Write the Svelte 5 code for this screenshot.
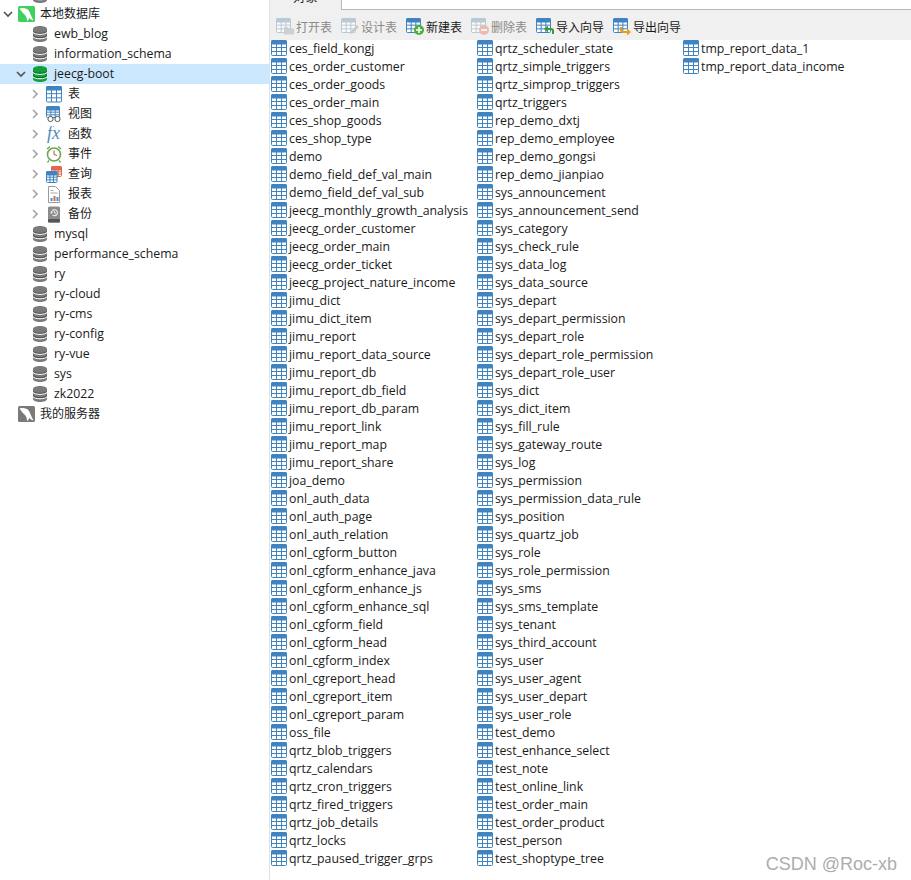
<script>
  const dbsTop = ["ewb_blog", "information_schema"];
  const dbsBottom = ["mysql", "performance_schema", "ry", "ry-cloud", "ry-cms", "ry-config", "ry-vue", "sys", "zk2022"];
  const objects = [
    ["表", "table"], ["视图", "view"], ["函数", "fx"], ["事件", "clock"],
    ["查询", "query"], ["报表", "report"], ["备份", "backup"],
  ];
  const tools = [
    ["打开表", "open", true], ["设计表", "design", true], ["新建表", "add", false],
    ["删除表", "del", true], ["导入向导", "import", false], ["导出向导", "export", false],
  ];
  const tables = `ces_field_kongj ces_order_customer ces_order_goods ces_order_main ces_shop_goods ces_shop_type demo demo_field_def_val_main demo_field_def_val_sub jeecg_monthly_growth_analysis jeecg_order_customer jeecg_order_main jeecg_order_ticket jeecg_project_nature_income jimu_dict jimu_dict_item jimu_report jimu_report_data_source jimu_report_db jimu_report_db_field jimu_report_db_param jimu_report_link jimu_report_map jimu_report_share joa_demo onl_auth_data onl_auth_page onl_auth_relation onl_cgform_button onl_cgform_enhance_java onl_cgform_enhance_js onl_cgform_enhance_sql onl_cgform_field onl_cgform_head onl_cgform_index onl_cgreport_head onl_cgreport_item onl_cgreport_param oss_file qrtz_blob_triggers qrtz_calendars qrtz_cron_triggers qrtz_fired_triggers qrtz_job_details qrtz_locks qrtz_paused_trigger_grps qrtz_scheduler_state qrtz_simple_triggers qrtz_simprop_triggers qrtz_triggers rep_demo_dxtj rep_demo_employee rep_demo_gongsi rep_demo_jianpiao sys_announcement sys_announcement_send sys_category sys_check_rule sys_data_log sys_data_source sys_depart sys_depart_permission sys_depart_role sys_depart_role_permission sys_depart_role_user sys_dict sys_dict_item sys_fill_rule sys_gateway_route sys_log sys_permission sys_permission_data_rule sys_position sys_quartz_job sys_role sys_role_permission sys_sms sys_sms_template sys_tenant sys_third_account sys_user sys_user_agent sys_user_depart sys_user_role test_demo test_enhance_select test_note test_online_link test_order_main test_order_product test_person test_shoptype_tree tmp_report_data_1 tmp_report_data_income`.split(" ");
</script>

{#snippet grid(color, x = 0.5, y = 0.5, w = 15, h = 15)}
  <rect x={x} y={y} width={w} height={h} rx="1" fill="#fff" stroke={color} />
  <rect x={x} y={y} width={w} height="3.5" rx="1" fill={color} stroke={color} />
  <path d="M{x + w / 3} {y + 3}V{y + h}M{x + (2 * w) / 3} {y + 3}V{y + h}M{x} {y + 3 + (h - 3) / 3}H{x + w}M{x} {y + 3 + (2 * (h - 3)) / 3}H{x + w}" stroke={color} fill="none" />
{/snippet}

{#snippet db(color, dark)}
  <svg class="db" width="14" height="16" viewBox="0 0 14 16">
    <path d="M0 3c0-4 14-4 14 0v10c0 4-14 4-14 0z" fill={color} />
    <path d="M0 5.200c1.500 2.800 12.500 2.800 14 0M0 9.600c1.500 2.800 12.500 2.800 14 0" stroke={dark} stroke-width="1.200" fill="none" />
    <path d="M0 6.300c1.500 2.800 12.500 2.800 14 0M0 10.700c1.500 2.800 12.500 2.800 14 0" stroke="#fff" stroke-width="1" fill="none" />
  </svg>
{/snippet}

{#snippet dolphin(bg)}
  <svg class="fish" width="17" height="16" viewBox="0 0 17 16">
    <rect width="17" height="16" rx="1.500" fill={bg} />
    <path d="M1.500 2.500C5 1.500 9 2 11 5c1.500 2.500 2 5 4.500 9.500-2-.5-3-1.500-4-2.500-.5 1-1.500 2.500-2.500 3 0-2-.5-4-1.500-5.500C6 8 3.500 6 1.500 2.500z" fill="#fff" />
  </svg>
{/snippet}

{#snippet objIcon(kind)}
  <svg width="16" height="17" viewBox="0 0 16 17">
    {#if kind === "table"}
      {@render grid("#3f84c0", 0.5, 0.5, 15, 15.500)}
    {:else if kind === "view"}
      {@render grid("#3f84c0", 0.5, 0.5, 13, 11)}
      <circle cx="4.500" cy="13" r="2.600" fill="#fff" stroke="#555" />
      <circle cx="11.500" cy="13" r="2.600" fill="#fff" stroke="#555" />
    {:else if kind === "fx"}
      <text x="1" y="13" class="fx">fx</text>
    {:else if kind === "clock"}
      <circle cx="8" cy="8.500" r="6.500" fill="#fff" stroke="#6aa84f" stroke-width="1.600" />
      <path d="M8 4.500v4l3 1" stroke="#c0504d" fill="none" />
      <path d="M1 3l3-2.500M15 3l-3-2.500M3 14.500l-1.500 2M13 14.500l1.500 2" stroke="#6aa84f" stroke-width="1.300" />
    {:else if kind === "query"}
      {@render grid("#e0684b", 5.500, 0.500, 10, 10)}
      {@render grid("#3f84c0", 0.500, 5.500, 10.500, 11)}
    {:else if kind === "report"}
      <path d="M2.500.5h7l4 4v12h-11z" fill="#fff" stroke="#9a9a9a" />
      <path d="M4.500 4.500h3M4.500 7h7" stroke="#aaa" />
      <rect x="4.500" y="12" width="2" height="3" fill="#4a90d0" />
      <rect x="7.500" y="10" width="2" height="5" fill="#e8623a" />
      <rect x="10.500" y="11" width="2" height="4" fill="#4a90d0" />
    {:else}
      <rect x="2" y="0.500" width="12" height="16" rx="1.500" fill="#8c8c8c" />
      <rect x="2" y="13" width="12" height="3.500" rx="1" fill="#555" />
      <path d="M5.500 6.500a3 3 0 1 1 1 2.400" stroke="#e6e6e6" stroke-width="1.200" fill="none" />
      <path d="M4 6h3l-1.500 2z" fill="#e6e6e6" />
      <path d="M8.500 5v2h1.500" stroke="#e6e6e6" fill="none" />
    {/if}
  </svg>
{/snippet}

{#snippet toolIcon(kind, off)}
  <svg class:off width="19" height="18" viewBox="0 0 19 18">
    {@render grid(off ? "#a9bccb" : "#3f84c0", 0.500, 0.500, 14, 14)}
    {#if kind === "add"}
      <circle cx="13" cy="12" r="5" fill="#4caf3c" />
      <path d="M10 12h6M13 9v6" stroke="#fff" stroke-width="1.600" />
    {:else if kind === "del"}
      <circle cx="13" cy="12" r="5" fill="#e8a8a0" />
      <path d="M10 12h6" stroke="#fff" stroke-width="1.600" />
    {:else if kind === "open"}
      <path d="M8 9h4l1 1.500h5v6H8z" fill="#c4c4c4" />
    {:else if kind === "design"}
      <path d="M9 16l1-3 6-6 2 2-6 6z" fill="#bdbdbd" />
    {:else if kind === "import"}
      <path d="M17 16v-3a2 2 0 0 0-2-2h-4" stroke="#3c9a3c" stroke-width="2" fill="none" />
      <path d="M8 11l4-3.500v7z" fill="#3c9a3c" />
    {:else}
      <path d="M8 9v3a2 2 0 0 0 2 2h4" stroke="#f09a1a" stroke-width="2" fill="none" />
      <path d="M18 14l-4-3.500v7z" fill="#f09a1a" />
    {/if}
  </svg>
{/snippet}

{#snippet chevron(open, color)}
  {#if open}
    <svg class="chev" width="10" height="10" viewBox="0 0 10 10">
      <path d="M1 3l4 4 4-4" stroke={color} stroke-width="1.700" fill="none" />
    </svg>
  {:else}
    <svg class="chev" width="7" height="10" viewBox="0 0 7 10">
      <path d="M1 1l4 4-4 4" stroke={color} stroke-width="1.700" fill="none" />
    </svg>
  {/if}
{/snippet}

<div class="app">
  <aside class="tree">
    <div class="clipped">{@render db("#7a7a7a", "#555")}</div>
    <div class="row conn">
      {@render chevron(true, "#555")}
      {@render dolphin("#3fd05f")}
      <span class="cjk">本地数据库</span>
    </div>
    {#each dbsTop as name}
      <div class="row dbrow">{@render db("#7a7a7a", "#555")}<span>{name}</span></div>
    {/each}
    <div class="row dbrow open">
      {@render chevron(true, "#555")}
      {@render db("#12a03c", "#0b6a28")}
      <span>jeecg-boot</span>
    </div>
    {#each objects as [label, kind]}
      <div class="row objrow">
        {@render chevron(false, "#a6a6a6")}
        {@render objIcon(kind)}
        <span class="cjk">{label}</span>
      </div>
    {/each}
    {#each dbsBottom as name}
      <div class="row dbrow">{@render db("#7a7a7a", "#555")}<span>{name}</span></div>
    {/each}
    <div class="row conn server">
      {@render dolphin("#7a7a7a")}
      <span class="cjk">我的服务器</span>
    </div>
  </aside>

  <main class="content">
    <div class="tabs">
      <div class="tab"><span>对象</span></div>
      <div class="tabfill"></div>
    </div>
    <div class="toolbar">
      {#each tools as [label, kind, off]}
        <div class="tool" class:disabled={off}>
          {@render toolIcon(kind, off)}
          <span class="cjk">{label}</span>
        </div>
      {/each}
    </div>
    <div class="list">
      {#each tables as t}
        <div class="item">
          <svg width="16" height="16" viewBox="0 0 16 16">{@render grid("#3f84c0")}</svg>
          <span>{t}</span>
        </div>
      {/each}
    </div>
  </main>

  <div class="mark">CSDN @Roc-xb</div>
</div>

<style>
  :global(body) {
    background: #fff;
  }

  .app {
    position: relative;
    display: flex;
    width: 911px;
    height: 880px;
    overflow: hidden;
    font-family: "Open Sans", "Noto Sans CJK SC", sans-serif;
    font-size: 12.3px;
    color: #1a1a1a;
  }

  .cjk {
    font-size: 12px;
  }

  .tree {
    width: 269px;
    flex: none;
    border-right: 1px solid #e0e0e0;
  }

  .clipped {
    height: 3px;
    margin: 0 0 1px 33px;
    overflow: hidden;
    display: flex;
    align-items: flex-end;
  }

  .row {
    height: 20px;
    display: flex;
    align-items: center;
  }

  .row span {
    white-space: nowrap;
    margin-top: -2px;
  }

  .chev,
  .db,
  .fish {
    flex: none;
  }

  .conn {
    padding-left: 3px;
    gap: 5px;
  }

  .server {
    padding-left: 18px;
  }

  .dbrow {
    padding-left: 33px;
    gap: 7px;
  }

  .dbrow.open {
    padding-left: 16px;
    background: #cce8ff;
    gap: 0;
  }

  .dbrow.open .chev {
    margin-right: 7px;
  }

  .dbrow.open .db {
    margin-right: 7px;
  }

  .objrow {
    padding-left: 32px;
    gap: 7px;
  }

  .objrow span {
    margin-left: -1px;
  }

  .content {
    flex: 1;
    min-width: 0;
    display: flex;
    flex-direction: column;
  }

  .tabs {
    height: 10px;
    display: flex;
    flex: none;
    overflow: hidden;
    background: #f0f0f0;
  }

  .tab {
    width: 71px;
    position: relative;
    flex: none;
  }

  .tab span {
    position: absolute;
    left: 23px;
    top: -12px;
  }

  .tabfill {
    flex: 1;
    background: #fff;
    border-left: 1px solid #b8b8b8;
    border-bottom: 1px solid #b8b8b8;
  }

  .toolbar {
    height: 30px;
    flex: none;
    box-sizing: border-box;
    display: flex;
    align-items: center;
    padding: 4px 0 0 6px;
    gap: 9px;
    background: #f0f0f0;
  }

  .tool {
    display: flex;
    align-items: center;
    gap: 1px;
  }

  .tool.disabled {
    color: #8a8a8a;
  }

  .off {
    opacity: 0.75;
  }

  .list {
    flex: 1;
    display: grid;
    grid-auto-flow: column;
    grid-template-rows: repeat(46, 18px);
    grid-auto-columns: 206px;
    padding-left: 1px;
  }

  .item {
    display: flex;
    align-items: flex-start;
    gap: 2px;
    white-space: nowrap;
  }

  .item span {
    line-height: 18px;
  }

  .fx {
    font-family: "Liberation Serif", serif;
    font-style: italic;
    font-size: 18px;
    fill: #4f8db8;
  }

  .mark {
    position: absolute;
    right: 14px;
    bottom: 5px;
    font-family: "Liberation Sans", sans-serif;
    font-size: 18px;
    color: #adadad;
  }
</style>
